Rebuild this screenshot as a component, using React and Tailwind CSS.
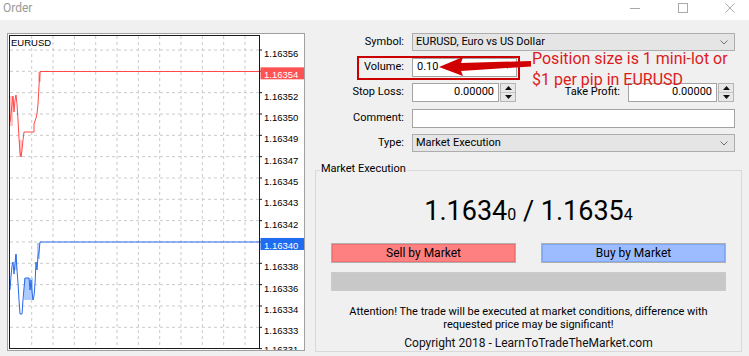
import React from "react";

// price axis levels, top to bottom
const levels = [
  "1.16356", "1.16354", "1.16352", "1.16350", "1.16349", "1.16347", "1.16345", "1.16343",
  "1.16342", "1.16340", "1.16338", "1.16336", "1.16334", "1.16333", "1.16331",
];
const gy = (i) => 50 + i * 21.33;
const gx = Array.from({ length: 11 }, (_, i) => 31.7 + i * 21.33);
// last label sits a little higher so it peeks in above the frame
const labelY = (i) => (i === levels.length - 1 ? gy(i) + 4.5 : gy(i) + 7);

const askLine =
  "10,122 11,114 12,104 13,96 14,112 15,100 16,95 17,104 18,120 19,138 20,152 21,157 22,150 23,140 24,132 34,132 34,124 35,121 36,118 37,114 38,104 39,86 40,71.5 259,71.5";
const bidLine =
  "10,290 11,276 12,266 13,262 14,274 15,263 16,254 17,270 18,283 19,300 20,314 22,314 23,300 24,288 25,278 29,278 30,290 31,280 32,292 33,300 34,296 35,284 36,262 37,270 38,256 39,252 40,242 259,242";

const Chart = () => (
  <div className="w-[298px] h-[318px] border border-[#a0a0a0] bg-white overflow-hidden">
    <svg width="296" height="316" viewBox="8 34 296 316" className="block">
      {gx.map((x) => (
        <line key={x} x1={x} y1="36" x2={x} y2="348" stroke="#cacaca" strokeDasharray="3 3" />
      ))}
      {levels.map((_, i) => (
        <line key={i} x1="10" y1={gy(i)} x2="259" y2={gy(i)} stroke="#cacaca" strokeDasharray="3 3" />
      ))}
      {/* ask ranges */}
      <rect x="10" y="96" width="3" height="30" fill="#ffc4c4" />
      <rect x="19" y="140" width="3" height="17" fill="#ffc4c4" />
      <rect x="38" y="72" width="3" height="10" fill="#ffc4c4" />
      {/* bid ranges */}
      <rect x="24" y="278" width="9" height="22" fill="#aecbff" />
      <rect x="15" y="255" width="2" height="15" fill="#aecbff" />
      <rect x="37" y="243" width="3" height="16" fill="#aecbff" />
      <polyline points={askLine} fill="none" stroke="#ff4a4a" strokeWidth="1" />
      <polyline points={bidLine} fill="none" stroke="#2a6ae8" strokeWidth="1" />
      <rect x="9.5" y="35.5" width="250" height="313" fill="none" stroke="#1a1a1a" strokeWidth="1" />
      {levels.map((_, i) => (
        <line key={i} x1="259" y1={gy(i)} x2="262" y2={gy(i)} stroke="#1a1a1a" />
      ))}
      <rect x="260.5" y={gy(1) - 4} width="44" height="12" fill="#ff5252" />
      <rect x="260.5" y={gy(9) - 4} width="44" height="12" fill="#1f6cf0" />
      {levels.map((v, i) => (
        <text
          key={v}
          x="264"
          y={labelY(i)}
          fontFamily="'Liberation Sans', Arial, sans-serif"
          fontSize="9.5"
          fill={i === 1 || i === 9 ? "#ffffff" : "#000000"}
        >
          {v}
        </text>
      ))}
      <text x="11" y="46" fontFamily="'Liberation Sans', Arial, sans-serif" fontSize="9.5" fill="#000">
        EURUSD
      </text>
    </svg>
  </div>
);

const Chevron = () => (
  <svg width="8" height="5" viewBox="0 0 8 5" className="ml-auto mr-[6px]">
    <path d="M0.5 0.5 L4 4 L7.5 0.5" fill="none" stroke="#707070" strokeWidth="1" />
  </svg>
);

const Select = ({ value }) => (
  <div className="h-full flex items-center bg-[#e5e5e5] border border-[#adadad] pl-[3px]">
    <span>{value}</span>
    <Chevron />
  </div>
);

const Field = ({ value, align = "left", className = "" }) => (
  <div
    className={`h-full flex items-center bg-white border border-[#a3a3a3] ${
      align === "right" ? "justify-end pr-[4px]" : "pl-[4px]"
    } ${className}`}
  >
    {value}
  </div>
);

const Spinner = () => (
  <div className="w-[16px] h-full ml-[1px] flex flex-col border border-[#b5b5b5] bg-[#e8e8e8]">
    <div className="flex-1 flex items-center justify-center border-b border-[#c4c4c4]">
      <svg width="7" height="4" viewBox="0 0 7 4">
        <path d="M0 4 L3.5 0 L7 4Z" fill="#111" />
      </svg>
    </div>
    <div className="flex-1 flex items-center justify-center">
      <svg width="7" height="4" viewBox="0 0 7 4">
        <path d="M0 0 L3.5 4 L7 0Z" fill="#111" />
      </svg>
    </div>
  </div>
);

const Row = ({ label, className, children }) => (
  <div className={`flex ${className}`}>
    <div className="w-[89px] flex items-center justify-end">{label}</div>
    <div className="ml-[8px] w-[323px] h-full flex">{children}</div>
  </div>
);

const TitleBar = () => (
  <div className="h-[20px] bg-white flex items-start shrink-0">
    <span className="pl-[3px] text-[12px] leading-[16px] text-[#9a9a9a]">Order</span>
    <div className="ml-auto pr-[14px] pt-[3px] flex items-start">
      <svg width="10" height="10" viewBox="0 0 10 10">
        <line x1="0" y1="5.5" x2="10" y2="5.5" stroke="#aaa" />
      </svg>
      <svg width="10" height="10" viewBox="0 0 10 10" className="ml-[38px]">
        <rect x="0.5" y="0.5" width="9" height="9" fill="none" stroke="#aaa" />
      </svg>
      <svg width="10" height="10" viewBox="0 0 10 10" className="ml-[37px]">
        <path d="M0.5 0.5 L9.5 9.5 M9.5 0.5 L0.5 9.5" stroke="#aaa" />
      </svg>
    </div>
  </div>
);

export default function App() {
  return (
    <div className="w-[749px] h-[356px] bg-[#f0f0f0] flex flex-col overflow-hidden font-['Roboto',sans-serif] text-[11px] text-black">
      <TitleBar />
      <div className="flex pl-[7px] pt-[13px]">
        <Chart />
        <div className="relative ml-[10px] w-[434px] flex flex-col">
          <Row label="Symbol:" className="h-[18px]">
            <div className="w-full">
              <Select value="EURUSD, Euro vs US Dollar" />
            </div>
          </Row>
          <Row label="Volume:" className="h-[19px] mt-[7px]">
            <div className="w-[105px] h-full flex items-center bg-white border border-[#a3a3a3] pl-[4px]">
              <span>0.10</span>
              <svg width="5" height="3" viewBox="0 0 5 3" className="ml-auto mr-[6px]">
                <path d="M0 0 L2.5 3 L5 0Z" fill="#888" />
              </svg>
            </div>
          </Row>
          <Row label="Stop Loss:" className="h-[19px] mt-[6px]">
            <div className="w-[87px] h-full">
              <Field value="0.00000" align="right" />
            </div>
            <Spinner />
            <div className="w-[104px] flex items-center justify-end">Take Profit:</div>
            <div className="ml-[8px] w-[89px] h-full">
              <Field value="0.00000" align="right" />
            </div>
            <Spinner />
          </Row>
          <Row label="Comment:" className="h-[19px] mt-[7px]">
            <div className="w-full h-full">
              <Field value="" />
            </div>
          </Row>
          <Row label="Type:" className="h-[18px] mt-[6px]">
            <div className="w-full">
              <Select value="Market Execution" />
            </div>
          </Row>

          <div className="relative mt-[18px] w-[427px] h-[182px] border border-[#d9d9d9] flex flex-col items-center">
            <span className="absolute left-[4px] top-[-9px] bg-[#f0f0f0] px-[1px] leading-[14px]">
              Market Execution
            </span>
            <div className="mt-[25px] h-[30px] leading-[30px] flex items-baseline text-[27px] text-black">
              <span>1.1634</span>
              <span className="text-[16px]">0</span>
              <span className="whitespace-pre"> / 1.1635</span>
              <span className="text-[16px]">4</span>
            </div>
            <div className="mt-[17px] w-full px-[15px] flex justify-between">
              <div className="w-[185px] h-[20px] flex items-center justify-center bg-[#ff8080] border border-[#b0b0b0] shadow-[inset_0_0_0_1px_#f07070] text-[12px]">
                Sell by Market
              </div>
              <div className="w-[185px] h-[20px] flex items-center justify-center bg-[#9cbcff] border border-[#b0b0b0] shadow-[inset_0_0_0_1px_#80a8f0] text-[12px]">
                Buy by Market
              </div>
            </div>
            <div className="mt-[9px] w-[395px] h-[20px] bg-[#c8c8c8] border border-[#cbcbcb]" />
            <p className="mt-[14px] text-center leading-[13px]">
              Attention! The trade will be executed at market conditions, difference with
              <br />
              requested price may be significant!
            </p>
            <p className="mt-[5px] text-[12px] leading-[15px] text-[#111]">
              Copyright 2018 - LearnToTradeTheMarket.com
            </p>
          </div>

          {/* annotation overlay */}
          <div className="absolute left-[42px] top-[23px] w-[163px] h-[24px] border-2 border-[#cc0000]" />
          <svg
            width="96"
            height="22"
            viewBox="437 56 96 22"
            className="absolute left-[122px] top-[23px]"
          >
            <path
              d="M439 67 L463 57 L461 63 L531 61 L531 66.5 L461 71 L463 76 Z"
              fill="#d10000"
            />
          </svg>
          <div className="absolute left-[217px] top-[15px] text-[16px] leading-[21px] text-[#dd1c1c] whitespace-nowrap">
            Position size is 1 mini-lot or
            <br />
            $1 per pip in EURUSD
          </div>
        </div>
      </div>
    </div>
  );
}
